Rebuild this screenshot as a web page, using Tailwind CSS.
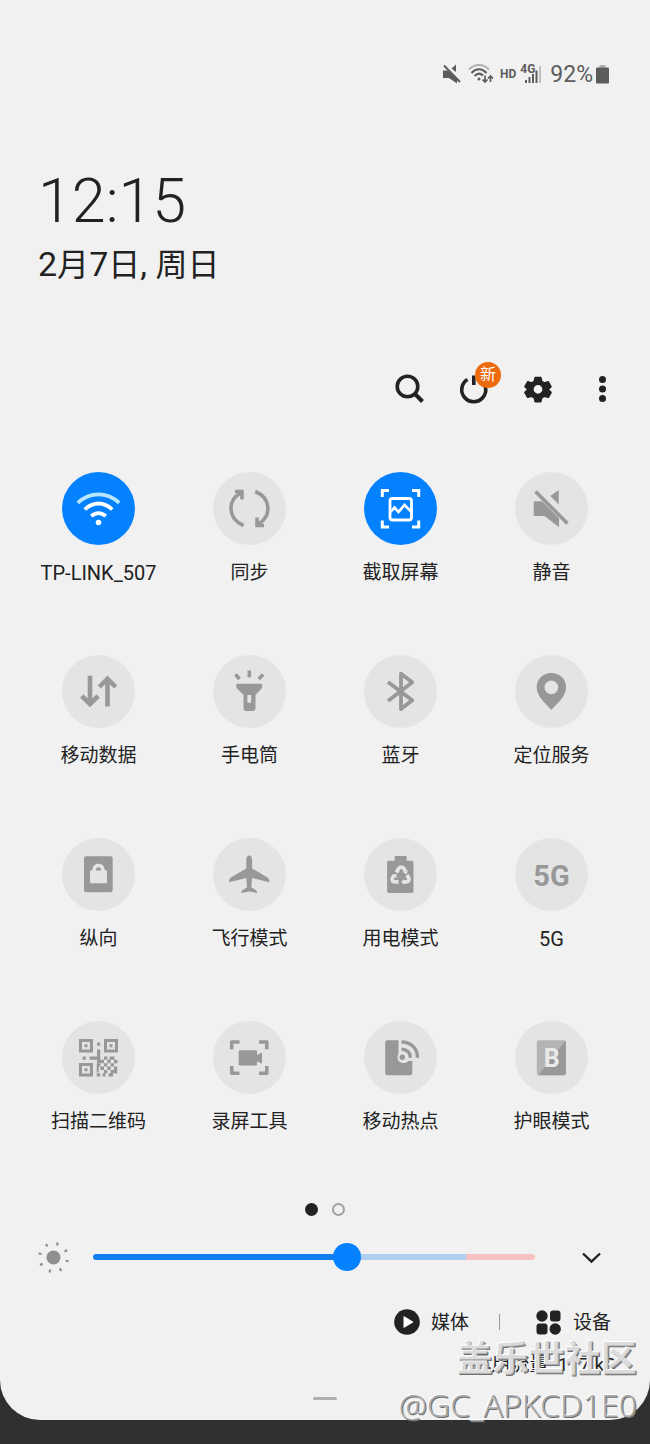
<!DOCTYPE html>
<html lang="zh-CN">
<head>
<meta charset="utf-8">
<meta name="viewport" content="width=device-width, initial-scale=1">
<title>快速设置</title>
<script src="https://cdn.jsdelivr.net/npm/@tailwindcss/browser@4"></script>
</head>
<body class="min-h-screen bg-[#303030] font-['Roboto','Noto_Sans_CJK_SC',sans-serif] text-[#222222]">
<main class="relative rounded-b-[40px] bg-[#f1f1f1] pt-[60px] pb-5">

  <!-- Status bar -->
  <header class="flex h-7 items-center justify-end pr-10 text-[#5c5c5c]">
    <svg class="h-5 w-5" viewBox="0 0 20 20" fill="currentColor" aria-label="静音">
      <path d="M1 6.500h4.500L15 15v4.500L7 14H1zM14 .500V8L9.500 4.500z"/>
      <path d="M2 1.500 18 18" stroke="currentColor" stroke-width="2"/>
    </svg>
    <svg class="ml-1.5 h-5 w-[26px]" viewBox="0 0 26 20" fill="none" stroke="currentColor" stroke-width="2" aria-label="WLAN">
      <path d="M1 5.500C7-.500 15-.500 21 5.500" stroke="#b0b0b0"/>
      <path d="M3.500 9C8 4 14 4 18.500 9M6.500 12C9.500 9 12.500 9 15 11.500"/>
      <circle cx="11" cy="15" r="1.500" fill="currentColor" stroke="none"/>
      <path d="M17 11.500v6M14.500 15.500 17 18l2.500-2.500M22.500 18v-6M20 14.500 22.500 12l2.500 2.500" stroke-width="1.700"/>
    </svg>
    <span class="ml-1.5 text-[12px] font-bold leading-4">HD</span>
    <span class="relative ml-1 h-5 w-[22px]">
      <svg class="h-5 w-[22px]" viewBox="0 0 22 20" fill="currentColor" aria-label="信号">
        <path d="M5 16h2v3H5zM8.500 13h2v6h-2zM12 10h2v9h-2zM15.500 6.500h2V19h-2z"/>
        <path d="M19 2h2v17h-2z" fill="#c0c0c0"/>
      </svg>
      <span class="absolute -top-px left-0 text-[12px] font-bold leading-3">4G</span>
    </span>
    <span class="ml-2 pt-0.5 text-[23px] leading-7">92%</span>
    <svg class="ml-0.5 h-5 w-[15px]" viewBox="0 0 15 20" aria-label="电池">
      <path d="M4.500 1h6v3h-6z" fill="#b0b0b0"/>
      <rect x="1" y="3.500" width="13" height="16" rx="1" fill="currentColor"/>
    </svg>
  </header>

  <section class="mt-[77px] px-[38px]">
    <h1 class="text-[61px] font-light leading-[72px]">12:15</h1>
    <p class="mt-[7px] text-[34px] leading-10">2<span class="text-[32px]">月</span>7<span class="text-[32px]">日</span>, <span class="text-[32px]">周日</span></p>
  </section>

  <nav class="mt-[83px] flex justify-end pr-4">
    <button class="flex h-10 w-16 items-center justify-center" aria-label="搜索">
      <svg class="h-10 w-10" viewBox="0 0 40 40" fill="none" stroke="currentColor" stroke-width="3.600"><circle cx="17.500" cy="18.500" r="10.300"/><path d="m25 26 7.500 7.500" stroke-width="4"/></svg>
    </button>
    <button class="relative flex h-10 w-16 items-center justify-center" aria-label="电源">
      <svg class="h-10 w-10" viewBox="0 0 40 40" fill="none" stroke="currentColor" stroke-width="3.600"><path d="M13.500 11.500A12 12 0 1 0 26 11.500M19.800 7.500v9.500"/></svg>
      <span class="absolute -top-1.5 right-[5px] flex h-[26px] w-[26px] items-center justify-center rounded-full bg-[#ed6b0c] text-[16px] leading-none text-white">新</span>
    </button>
    <button class="flex h-10 w-16 items-center justify-center" aria-label="设置">
      <svg class="h-10 w-10" viewBox="0 0 40 40" fill="currentColor" stroke="currentColor" stroke-width="2" stroke-linejoin="round"><path fill-rule="evenodd" d="M17 8.500h6l1 4.200 3 1.700 4.200-1.200 3 5.200-3.200 3v.400l3.200 3-3 5.200-4.200-1.200-3 1.700-1 4.200h-6l-1-4.200-3-1.700-4.200 1.200-3-5.200 3.200-3v-.400l-3.200-3 3-5.200 4.200 1.200 3-1.700zM20 15.500a5.800 5.800 0 1 0 0 11.600 5.800 5.800 0 1 0 0-11.600z" transform="translate(1.800 1.900) scale(.91)"/></svg>
    </button>
    <button class="flex h-10 w-16 items-center justify-center" aria-label="更多">
      <svg class="h-10 w-10" viewBox="0 0 40 40" fill="currentColor"><circle cx="20.500" cy="11.500" r="3.500"/><circle cx="20.500" cy="21" r="3.500"/><circle cx="20.500" cy="30.500" r="3.500"/></svg>
    </button>
  </nav>

  <!-- Quick setting tiles -->
  <section class="mt-16 grid grid-cols-4 gap-y-[70px] px-[23px] text-[19px] leading-6">
    <button class="flex flex-col items-center gap-4">
      <svg class="h-[73px] w-[73px] rounded-full bg-[#0381fe] text-white" viewBox="0 0 73 73" fill="none" stroke="currentColor" stroke-width="3.800">
        <path d="M15.800 30.800C28 19.500 45 19.500 57.200 30.800" stroke="#b9e6ff"/>
        <path d="M22.800 37.500C31 29.500 42 29.500 50.200 37.500M29.300 44.200C33.500 40 39.500 40 43.700 44.200"/>
        <circle cx="36.500" cy="50.500" r="2.800" fill="currentColor" stroke="none"/>
      </svg>
      <span class="text-[20px] leading-6">TP-LINK_507</span>
    </button>
    <button class="flex flex-col items-center gap-4">
      <svg class="h-[73px] w-[73px] rounded-full bg-[#e4e4e4] text-[#989898]" viewBox="0 0 73 73" fill="none" stroke="currentColor" stroke-width="3.600">
        <path d="M30.500 53.500C14.500 46.500 14 28 28 21M42.200 19.500C58 26 59 43.500 45.500 52"/>
        <path d="M22 19.500h7v8M51 53.500h-7v-8"/><path d="M24 19.500h5v6zM49 53.500h-5v-6z" fill="currentColor" stroke="none"/>
      </svg>
      <span>同步</span>
    </button>
    <button class="flex flex-col items-center gap-4">
      <svg class="h-[73px] w-[73px] rounded-full bg-[#0381fe] text-white" viewBox="0 0 73 73" fill="none" stroke="currentColor" stroke-width="3">
        <path d="M18.300 25v-6.500h6.700M48 18.500h6.700V25M54.700 48.500V55H48M25 55h-6.700v-6.500"/>
        <rect x="26" y="26.500" width="21.500" height="21.500" rx="2.500" stroke-width="2.800"/>
        <path d="m26.500 40 4-4.500 4 4.500 6-7 6.500 6.500" stroke-width="2.600"/>
      </svg>
      <span>截取屏幕</span>
    </button>
    <button class="flex flex-col items-center gap-4">
      <svg class="h-[73px] w-[73px] rounded-full bg-[#e4e4e4] text-[#989898]" viewBox="0 0 73 73" fill="currentColor">
        <path d="M20 29.200h7l17 17v9L29.500 44H20q-1.300 0-1.300-1.300V30.500q0-1.300 1.300-1.300zM43.700 18v14.500L35.300 24z"/>
        <path d="m20.500 19.500 32 32" stroke="currentColor" stroke-width="3.600"/>
      </svg>
      <span>静音</span>
    </button>

    <button class="flex flex-col items-center gap-4">
      <svg class="h-[73px] w-[73px] rounded-full bg-[#e4e4e4] text-[#989898]" viewBox="0 0 73 73" fill="none" stroke="currentColor" stroke-width="4.600">
        <path d="M28 20.700V49M19.800 41l8.200 8 8.200-8M45.500 51.500v-28M37.300 32l8.200-8.300 8.200 8.300"/>
      </svg>
      <span>移动数据</span>
    </button>
    <button class="flex flex-col items-center gap-4">
      <svg class="h-[73px] w-[73px] rounded-full bg-[#e4e4e4] text-[#989898]" viewBox="0 0 73 73" fill="currentColor">
        <path fill-rule="evenodd" d="M24 28.800h24.500q.700 0 .700.700v2.200q0 1-.700 1.700L42.500 40v13q0 3-3 3h-6q-3 0-3-3V40L24 33.400q-.700-.700-.700-1.700v-2.200q0-.700.700-.700zM34.400 40v7.700h3.800V40z"/>
        <path d="M36.300 15.500v6.800M22.500 19.500l4 4.500M50.200 19.500l-4.500 4.500" stroke="currentColor" stroke-width="3.600"/>
      </svg>
      <span>手电筒</span>
    </button>
    <button class="flex flex-col items-center gap-4">
      <svg class="h-[73px] w-[73px] rounded-full bg-[#e4e4e4] text-[#989898]" viewBox="0 0 73 73" fill="none" stroke="currentColor" stroke-width="3.800" stroke-linejoin="round">
        <path d="m24 27 24.200 18.300L37 54V18.700l11.200 8.600L24 46"/>
      </svg>
      <span>蓝牙</span>
    </button>
    <button class="flex flex-col items-center gap-4">
      <svg class="h-[73px] w-[73px] rounded-full bg-[#e4e4e4] text-[#989898]" viewBox="0 0 73 73" fill="currentColor">
        <path fill-rule="evenodd" d="M36.300 18C27.500 18 21.700 24.500 21.700 32c0 9.500 8 15.500 14.600 23C43 47.500 51 41.500 51 32c0-7.500-5.800-14-14.700-14zM36.300 25.600a6.800 6.800 0 1 1 0 13.600 6.800 6.800 0 1 1 0-13.600z"/>
      </svg>
      <span>定位服务</span>
    </button>

    <button class="flex flex-col items-center gap-4">
      <svg class="h-[73px] w-[73px] rounded-full bg-[#e4e4e4] text-[#989898]" viewBox="0 0 73 73" fill="currentColor">
        <rect x="22" y="18.300" width="28.700" height="36" rx="2.300"/>
        <path fill-rule="evenodd" fill="#e4e4e4" d="M28 33.500q0-1.300 1.300-1.300h1C30.300 28 33 25.800 36.500 25.800s6.200 2.200 6.200 6.400h1q1.300 0 1.300 1.300V44q0 1.300-1.300 1.300H29.300Q28 45.300 28 44zM33.800 32.500h5.400c0-4.200-5.400-4.200-5.400 0z"/>
      </svg>
      <span>纵向</span>
    </button>
    <button class="flex flex-col items-center gap-4">
      <svg class="h-[73px] w-[73px] rounded-full bg-[#e4e4e4] text-[#989898]" viewBox="0 0 73 73" fill="currentColor">
        <path d="M36.200 17.500c1.800 0 2.900 2 2.900 4.500v8.500l15 8.700c1.700 1 2.200 2.500 2.200 5L39.100 40l-.800 9.300 4.500 2.700c1 .7 1.200 1.500 1.200 3l-7.800-1.500-7.800 1.500c0-1.500.2-2.300 1.200-3l4.500-2.700-.800-9.300-17.200 4.200c0-2.500.5-4 2.200-5l15-8.700V22c0-2.500 1.100-4.500 2.900-4.500z"/>
      </svg>
      <span>飞行模式</span>
    </button>
    <button class="flex flex-col items-center gap-4">
      <svg class="h-[73px] w-[73px] rounded-full bg-[#e4e4e4] text-[#989898]" viewBox="0 0 73 73" fill="currentColor">
        <path d="M31.500 18h10.400q.8 0 .8.800v3.900h5q1.800 0 1.800 1.800v28.700q0 1.800-1.800 1.800H24.900q-1.800 0-1.800-1.800V24.500q0-1.800 1.800-1.800h5.800v-3.900q0-.8.800-.8z"/>
        <g fill="none" stroke="#e4e4e4" stroke-width="3.800">
          <path d="m32.400 34.600 2.200-4q1-1.500 3-1.500 1.500 0 2.300 1.500l1.400 2.600"/>
          <path d="m43 37 1.700 3q.8 1.600-.2 3-.8.800-2.400.8h-2.600"/>
          <path d="M34.500 43.800h-3.800q-1.600 0-2.300-1-.8-1.400.1-2.900l1.500-2.700"/>
        </g>
        <path fill="#e4e4e4" d="m43.800 31.700-.8 4.500-4.300-2zM40 41v6L37.200 44zM28 37l4.300-1.200.7 4.200z"/>
      </svg>
      <span>用电模式</span>
    </button>
    <button class="flex flex-col items-center gap-4">
      <span class="flex h-[73px] w-[73px] items-center justify-center rounded-full bg-[#e4e4e4] pt-0.5 text-[29px] font-bold text-[#989898]">5G</span>
      <span class="text-[20px] leading-6">5G</span>
    </button>

    <button class="flex flex-col items-center gap-4">
      <svg class="h-[73px] w-[73px] rounded-full bg-[#e4e4e4] text-[#989898]" viewBox="0 0 73 73" fill="currentColor">
        <g fill="none" stroke="currentColor" stroke-width="3"><path d="M18.500 19.500h11v10.500h-11zM43.500 19.500h11v10.500h-11zM18.500 43.500h11V54h-11z"/></g>
        <path d="M22.500 23.200h3v3h-3zM47.500 23.200h3v3h-3zM22.500 47.200h3v3h-3zM35 21.500h3.300v3.300H35zM20.500 35.500h3.300v3.300h-3.300zM27.500 35.500H35v3.300h-7.500zM35 28.500h3.300V42H35zM42 35.500h3.300v3.300H42zM47.500 35.500h5v3.300h-5zM38.300 38.800H42v3.400h-3.700zM45.300 38.800h3.300v3.400h-3.300zM52 38.800h3.500v3.400H52zM34.700 42.200h3.600v3.300h-3.600zM42 42.200h3.300v3.300H42zM48.600 42.200H52v3.300h-3.400zM38.300 45.500H42v3.400h-3.700zM45.300 45.500h3.300v3.400h-3.300zM52 45.500h3.300v7H52zM34.700 45.500h2v6h-2zM42 48.900h3.300v3.300H42zM48.600 48.900H52v3.300h-3.400zM34.700 52.200h3.600v3.300h-3.600zM40.500 52.200h3v3.300h-3zM46.500 52.200H51v3.300h-4.500z"/>
      </svg>
      <span>扫描二维码</span>
    </button>
    <button class="flex flex-col items-center gap-4">
      <svg class="h-[73px] w-[73px] rounded-full bg-[#e4e4e4] text-[#989898]" viewBox="0 0 73 73" fill="none" stroke="currentColor" stroke-width="3.600" stroke-linejoin="round">
        <path d="M18.700 28.300v-7.300h7.800M46 21h7.800v7.300M53.800 45v7.300H46M26.500 52.300h-7.800V45"/>
        <path d="M27 29.300h15.700q1.300 0 1.300 1.300v3.400l5-2.500v11.200l-5-2.500v3q0 1.300-1.300 1.300H27q-1.300 0-1.300-1.300V30.600q0-1.300 1.300-1.300z" fill="currentColor" stroke="none"/>
      </svg>
      <span>录屏工具</span>
    </button>
    <button class="flex flex-col items-center gap-4">
      <svg class="h-[73px] w-[73px] rounded-full bg-[#e4e4e4] text-[#989898]" viewBox="0 0 73 73" fill="currentColor">
        <path d="M23.500 19.300h11v13.500c-3 5 1 10 6 9.300 2-.3 3-1.100 3.700-2.100h4.100v12q0 2.300-2.300 2.300H23.500q-2.300 0-2.300-2.300V21.600q0-2.300 2.300-2.300z"/>
        <circle cx="38.300" cy="36.300" r="2.700"/>
        <path d="M37.500 21C47 21 53.500 27.500 53.500 36.700M37.500 28.200C42.500 28 46.500 31.500 46.300 36.700" fill="none" stroke="currentColor" stroke-width="3.400"/>
      </svg>
      <span>移动热点</span>
    </button>
    <button class="flex flex-col items-center gap-4">
      <svg class="h-[73px] w-[73px] rounded-full bg-[#e4e4e4] text-[#989898]" viewBox="0 0 73 73" fill="currentColor">
        <rect x="21.800" y="19.300" width="29" height="35" rx="2" fill="#b4b4b4"/>
        <path d="m50.300 19.800-27 34.500h25.500q2 0 2-2V21q0-.8-.5-1.200z"/>
        <text x="36.800" y="45.500" text-anchor="middle" font-size="25" font-weight="700" fill="#e9e9e9">B</text>
      </svg>
      <span>护眼模式</span>
    </button>
  </section>

  <!-- Page dots -->
  <div class="mt-[69px] flex justify-center gap-3.5">
    <span class="h-[13px] w-[13px] rounded-full bg-[#222222]"></span>
    <span class="h-[13px] w-[13px] rounded-full border-2 border-[#a0a0a0]"></span>
  </div>

  <!-- Brightness -->
  <div class="mt-[25px] flex h-8 items-center px-[38px]">
    <svg class="h-8 w-8" viewBox="0 0 32 32" fill="none" stroke="#8f8f8f" aria-hidden="true">
      <circle cx="15.500" cy="16.500" r="7" fill="#8f8f8f" stroke="none"/>
      <circle cx="15.500" cy="16.500" r="14" stroke-width="3" stroke-dasharray="2.200 8.796" transform="rotate(10 15.500 16.500)"/>
    </svg>
    <input type="range" min="0" max="100" value="58" aria-label="亮度" class="ml-[23px] h-[27px] min-w-0 flex-1 appearance-none bg-transparent [&::-webkit-slider-runnable-track]:h-1.5 [&::-webkit-slider-runnable-track]:rounded-full [&::-webkit-slider-runnable-track]:bg-[linear-gradient(to_right,#117ff0_58%,#aecff0_58%,#aecff0_84.5%,#f6c1c0_84.5%)] [&::-webkit-slider-thumb]:-mt-[11px] [&::-webkit-slider-thumb]:h-7 [&::-webkit-slider-thumb]:w-7 [&::-webkit-slider-thumb]:appearance-none [&::-webkit-slider-thumb]:rounded-full [&::-webkit-slider-thumb]:bg-[#0381fe]">
    <button class="ml-[37px] flex h-8 w-10 items-center justify-center" aria-label="展开">
      <svg class="h-6 w-6" viewBox="0 0 24 24" fill="none" stroke="currentColor" stroke-width="2.400"><path d="m3 8.500 8.500 8 8.500-8"/></svg>
    </button>
  </div>

  <div class="mt-[33px] flex h-8 items-center justify-end pr-[39px] text-[19px]">
    <button class="flex items-center gap-[11px]">
      <svg class="h-[26px] w-[26px]" viewBox="0 0 26 26"><circle cx="13" cy="13" r="12.800" fill="#222"/><path d="M9.500 7.700v10.600q0 .8.700.4l8.700-5.100q.7-.6 0-1.200l-8.700-5.100q-.7-.4-.7.4z" fill="#fff"/></svg>
      <span class="pt-0.5">媒体</span>
    </button>
    <span class="ml-[30px] h-4 w-px bg-[#9a9a9a]"></span>
    <button class="ml-9 flex items-center gap-3">
      <svg class="h-[25px] w-[25px]" viewBox="0 0 25 25" fill="#222"><circle cx="6" cy="6" r="5.700"/><rect x="14" y=".5" width="10.500" height="11" rx="3"/><rect x=".5" y="13.500" width="11" height="11" rx="3"/><circle cx="19.200" cy="19" r="5.700"/></svg>
      <span class="pt-0.5">设备</span>
    </button>
  </div>

  <p class="mt-[15px] pr-[34px] text-right text-[19px] leading-6">已用流量: 177 kB</p>
  <div class="mx-auto mt-5 h-[3px] w-6 rounded-full bg-[#b0b0b0]"></div>

  <!-- Author watermark -->
  <div class="pointer-events-none absolute right-[13px] -bottom-2 text-right whitespace-nowrap font-['Noto_Sans','Noto_Sans_CJK_SC',sans-serif]">
    <p class="text-[36px] leading-[46px] font-bold text-[#cccccc]/70 [text-shadow:-1px_-1px_0_#ffffff,1px_1px_0_#707070]">盖乐世社区</p>
    <p class="text-[32px] leading-[46px] font-light text-[#a8a8a8] [text-shadow:-1px_-1px_0_#ffffff,1px_1px_0_#707070]">@GC_APKCD1E0</p>
  </div>
</main>
</body>
</html>
